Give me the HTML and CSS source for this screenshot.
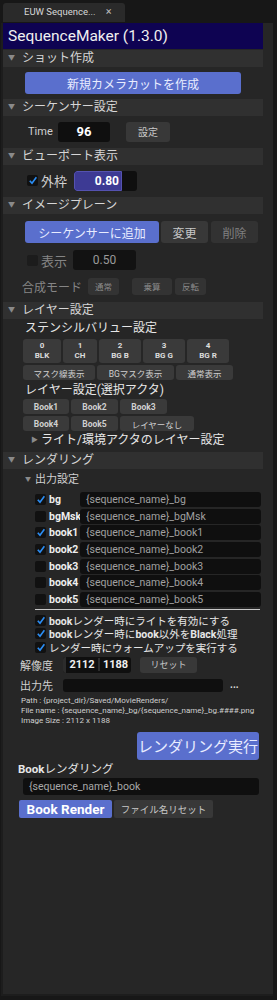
FILE: index.html
```
<!DOCTYPE html>
<html lang="ja">
<head>
  <meta charset="utf-8">
  <title>SequenceMaker</title>
  <link rel="stylesheet" href="styles.css">
</head>
<body>
<div class="tabbar">
  <div class="tab">EUW Sequence... <span class="close">×</span></div>
</div>

<div class="panel">
  <div class="content">
    <div class="title">SequenceMaker (1.3.0)</div>

    <!-- shot -->
    <div class="sec-head"><span class="tri">▼</span>ショット作成</div>
    <div class="sec shot">
      <button class="btn blue wide">新規カメラカットを作成</button>
    </div>

    <!-- sequencer -->
    <div class="sec-head"><span class="tri">▼</span>シーケンサー設定</div>
    <div class="sec row seq">
      <span class="lbl small">Time</span>
      <div class="field time">96</div>
      <button class="btn dark set">設定</button>
    </div>

    <!-- viewport -->
    <div class="sec-head"><span class="tri">▼</span>ビューポート表示</div>
    <div class="sec row vp">
      <span class="check on"></span>
      <span class="lbl">外枠</span>
      <div class="field slider"><div class="fill">0.80</div></div>
    </div>

    <!-- image plane -->
    <div class="sec-head"><span class="tri">▼</span>イメージプレーン</div>
    <div class="sec plane">
      <div class="row btns">
        <button class="btn blue add">シーケンサーに追加</button>
        <button class="btn dark change">変更</button>
        <button class="btn dark off del">削除</button>
      </div>
      <div class="row show">
        <span class="check dim"></span>
        <span class="lbl dim">表示</span>
        <div class="field opacity">0.50</div>
      </div>
      <div class="row blend">
        <span class="lbl dim">合成モード</span>
        <button class="btn mini">通常</button>
        <button class="btn mini mul">乗算</button>
        <button class="btn mini">反転</button>
      </div>
    </div>

    <!-- layers -->
    <div class="sec-head"><span class="tri">▼</span>レイヤー設定</div>
    <div class="sec layers">
      <div class="sub">ステンシルバリュー設定</div>
      <div class="row stencil">
        <button class="btn st w38">0<br>BLK</button>
        <button class="btn st w34">1<br>CH</button>
        <button class="btn st w42">2<br>BG B</button>
        <button class="btn st w42">3<br>BG G</button>
        <button class="btn st w42">4<br>BG R</button>
      </div>
      <div class="row stencil2">
        <button class="btn sm w72">マスク線表示</button>
        <button class="btn sm w77">BGマスク表示</button>
        <button class="btn sm w57">通常表示</button>
      </div>
      <div class="sub actor">レイヤー設定(選択アクタ)</div>
      <div class="book-grid">
        <button class="btn sm b">Book1</button>
        <button class="btn sm b">Book2</button>
        <button class="btn sm b">Book3</button>
        <button class="btn sm b">Book4</button>
        <button class="btn sm b">Book5</button>
        <button class="btn sm none">レイヤーなし</button>
      </div>
      <div class="light"><span class="tri side">▶</span>ライト/環境アクタのレイヤー設定</div>
    </div>

    <!-- rendering -->
    <div class="sec-head"><span class="tri">▼</span>レンダリング</div>
    <div class="sec render">
      <div class="out-head"><span class="tri">▼</span>出力設定</div>
      <div class="outputs">
        <div class="out"><span class="check on"></span><span class="name">bg</span><div class="field path">{sequence_name}_bg</div></div>
        <div class="out"><span class="check"></span><span class="name">bgMsk</span><div class="field path">{sequence_name}_bgMsk</div></div>
        <div class="out"><span class="check on"></span><span class="name">book1</span><div class="field path">{sequence_name}_book1</div></div>
        <div class="out"><span class="check on"></span><span class="name">book2</span><div class="field path">{sequence_name}_book2</div></div>
        <div class="out"><span class="check"></span><span class="name">book3</span><div class="field path">{sequence_name}_book3</div></div>
        <div class="out"><span class="check"></span><span class="name">book4</span><div class="field path">{sequence_name}_book4</div></div>
        <div class="out"><span class="check"></span><span class="name">book5</span><div class="field path">{sequence_name}_book5</div></div>
        <hr class="sep">
        <div class="opt"><span class="check on"></span><span><b>book</b>レンダー時にライトを有効にする</span></div>
        <div class="opt"><span class="check on"></span><span><b>book</b>レンダー時に<b>book</b>以外を<b>Black</b>処理</span></div>
        <div class="opt"><span class="check on"></span><span>レンダー時にウォームアップを実行する</span></div>
      </div>
      <div class="row res">
        <span class="lbl small">解像度</span>
        <div class="field size"><span class="grip"></span><span class="w">2112</span><span class="h">1188</span></div>
        <button class="btn dark reset">リセット</button>
      </div>
      <div class="row dest">
        <span class="lbl small">出力先</span>
        <div class="field dir"></div>
        <span class="dots">...</span>
      </div>
      <div class="info">
        <div>Path : {project_dir}/Saved/MovieRenders/</div>
        <div>File name : {sequence_name}_bg/{sequence_name}_bg.####.png</div>
        <div>Image Size : 2112 x 1188</div>
      </div>
      <div class="run-row">
        <button class="btn blue run">レンダリング実行</button>
      </div>
      <div class="book-title"><b>Book</b>レンダリング</div>
      <div class="field book-name">{sequence_name}_book</div>
      <div class="row book-btns">
        <button class="btn blue book-render">Book Render</button>
        <button class="btn dark fname">ファイル名リセット</button>
      </div>
    </div>
  </div>
</div>
</body>
</html>
```

FILE: styles.css
```
body {
    margin: 0;
    width: 277px;
    height: 1000px;
    background-color: #171717;
    color: #c8c8c8;
    font-family: Roboto, "Noto Sans CJK JP", sans-serif;
    overflow: hidden;
}

button {
    font-family: inherit;
    border: none;
    padding: 0;
    margin: 0;
}

.tabbar {
    height: 23px;
    padding: 3px 0 0 3px;
    box-sizing: border-box;
}

.tab {
    width: 122px;
    height: 19px;
    background-color: #2a2a2a;
    border-radius: 3px 3px 0 0;
    font-size: 9.5px;
    color: #d8d8d8;
    line-height: 18px;
    padding-left: 21px;
    box-sizing: border-box;
    white-space: nowrap;
}

.tab .close {
    margin-left: 8px;
    color: #bbb;
    font-size: 11px;
}

.panel {
    margin-left: 1px;
    width: 272px;
    height: 973px;
    background-color: #262626;
    border-left: 2px solid #1d1d1d;
    border-bottom: 2px solid #1d1d1d;
    box-sizing: border-box;
    padding-right: 10px;
}

.content {
    display: flex;
    flex-direction: column;
}

.title {
    height: 26px;
    background-color: #0e0352;
    color: #f0f0f0;
    font-size: 15.5px;
    line-height: 26px;
    padding-left: 5px;
}

.sec-head {
    height: 17px;
    background-color: #303030;
    color: #d6d6d6;
    font-size: 12px;
    line-height: 17px;
    padding-left: 5px;
    margin-top: 1px;
}

.tri {
    display: inline-block;
    font-size: 7px;
    color: #8a8a8a;
    width: 14px;
    vertical-align: 2px;
}

.tri.side {
    font-size: 7px;
    width: 10px;
}

.sec {
    padding-left: 22px;
}

.row {
    display: flex;
    align-items: center;
}

.btn {
    border-radius: 3px;
    color: #d0d0d0;
    text-align: center;
    white-space: nowrap;
}

.btn.blue {
    background-color: #5a6fcd;
    color: #e8ecff;
}

.btn.dark {
    background-color: #383838;
    color: #c8c8c8;
}

.btn.dark.off {
    background-color: #323232;
    color: #808080;
}

.field {
    background-color: #0f0f0f;
    border-radius: 3px;
    white-space: nowrap;
}

.lbl {
    font-size: 13px;
    color: #d0d0d0;
    white-space: nowrap;
}

.lbl.small {
    font-size: 11px;
}

.lbl.dim {
    color: #858585;
}

.check {
    width: 11px;
    height: 11px;
    background-color: #111;
    border-radius: 2px;
    flex-shrink: 0;
    position: relative;
}

.check.on::after {
    content: "";
    position: absolute;
    left: 2px;
    top: 1px;
    width: 8px;
    height: 9px;
    background: url('data:image/svg+xml;utf8,<svg xmlns="http://www.w3.org/2000/svg" viewBox="0 0 8 9"><path d="M0.8 4.8 L3 7.2 L7.4 1.2" fill="none" stroke="%232b8ef5" stroke-width="1.7"/></svg>') no-repeat;
}

.check.dim {
    background-color: #1c1c1c;
}

/* shot */
.shot {
    padding: 5px 0 4px 22px;
}

.btn.wide {
    width: 216px;
    height: 22px;
    font-size: 12px;
}

/* sequencer */
.seq {
    height: 31px;
}

.seq .lbl {
    margin-left: 3px;
    width: 30px;
}

.field.time {
    width: 52px;
    height: 20px;
    color: #fff;
    font-weight: bold;
    font-size: 13px;
    line-height: 20px;
    text-align: center;
}

.btn.set {
    margin-left: 16px;
    width: 44px;
    height: 20px;
    font-size: 10px;
}

/* viewport */
.vp {
    height: 31px;
    padding-left: 24px;
}

.vp .lbl {
    margin-left: 3px;
    width: 33px;
}

.field.slider {
    width: 63px;
    height: 20px;
    overflow: hidden;
}

.slider .fill {
    width: 48px;
    height: 20px;
    box-sizing: border-box;
    background-color: #3d3a94;
    border: 1px solid #5552b0;
    border-radius: 3px 0 0 3px;
    color: #fff;
    font-weight: bold;
    font-size: 12px;
    line-height: 18px;
    text-align: right;
    padding-right: 2px;
}

/* image plane */
.plane {
    padding: 7px 0 6px 22px;
}

.btns .btn {
    height: 22px;
    font-size: 12px;
}

.btn.add {
    width: 134px;
}

.btn.change {
    width: 47px;
    margin-left: 2px;
}

.btn.del {
    width: 47px;
    margin-left: 3px;
}

.show {
    margin-top: 7px;
    padding-left: 2px;
    height: 20px;
}

.show .lbl {
    margin-left: 3px;
    width: 32px;
}

.field.opacity {
    width: 63px;
    height: 20px;
    line-height: 20px;
    color: #9a9a9a;
    font-size: 12px;
    text-align: center;
    background-color: #121212;
}

.blend {
    margin-top: 7px;
    margin-left: -3px;
    height: 18px;
}

.blend .lbl {
    font-size: 12px;
    width: 66px;
}

.btn.mini {
    width: 31px;
    height: 17px;
    font-size: 8.5px;
    background-color: #333;
    color: #8a8a8a;
    margin-right: 13px;
}

.btn.mini.mul {
    width: 40px;
    margin-right: 3px;
}

/* layers */
.layers {
    padding: 0 0 3px 20px;
}

.sub {
    font-size: 12px;
    color: #e6e6e6;
    line-height: 18px;
    margin-left: 2px;
    white-space: nowrap;
}

.stencil {
    margin-top: 2px;
    gap: 2px;
}

.btn.st {
    height: 24px;
    background-color: #3a3a3a;
    font-size: 8px;
    font-weight: bold;
    line-height: 10px;
    color: #dcdcdc;
}

.w34 { width: 34px; }
.w38 { width: 38px; }
.w42 { width: 42px; }
.w57 { width: 57px; }
.w72 { width: 72px; }
.w77 { width: 77px; }

.btn.sm {
    height: 15px;
    background-color: #3a3a3a;
    font-size: 8.5px;
    color: #d0d0d0;
}

.stencil2 {
    margin-top: 2px;
    gap: 2px;
}

.sub.actor {
    margin-top: 1px;
}

.book-grid {
    display: grid;
    grid-template-columns: 46px 47px 47px;
    gap: 2px 2px;
}

.btn.sm.b {
    font-weight: bold;
}

.btn.sm.none {
    width: 74px;
}

.light {
    margin-top: 1px;
    padding-left: 8px;
    font-size: 12px;
    color: #e6e6e6;
    line-height: 16px;
    white-space: nowrap;
}

/* render */
.render {
    padding-left: 22px;
    padding-top: 3px;
}

.out-head {
    font-size: 11px;
    color: #d0d0d0;
    line-height: 13px;
}

.out-head .tri {
    width: 10px;
    font-size: 6px;
}

.outputs {
    padding-left: 10px;
    margin-top: 6px;
    margin-right: 2px;
}

.out {
    display: flex;
    align-items: center;
    height: 15px;
    margin-bottom: 1.67px;
}

.out .name {
    margin-left: 3px;
    width: 31px;
    font-size: 10.5px;
    font-weight: bold;
    color: #eee;
    white-space: nowrap;
}

.field.path {
    flex: 1;
    height: 15px;
    line-height: 15px;
    font-size: 10.5px;
    color: #a0a0a0;
    padding-left: 6px;
}

.sep {
    border: none;
    border-top: 1px solid #c8c8c8;
    margin: 0 1px 4px 0;
}

.opt {
    display: flex;
    align-items: center;
    height: 13px;
    font-size: 10.5px;
    color: #e6e6e6;
    margin-bottom: 0.5px;
    white-space: nowrap;
}

.opt .check {
    margin-right: 3px;
}

.res {
    margin-top: 3px;
    margin-left: -5px;
    height: 16px;
}

.res .lbl, .dest .lbl {
    width: 43px;
}

.field.size {
    width: 68px;
    height: 16px;
    display: flex;
    align-items: center;
    font-size: 11px;
    font-weight: bold;
    color: #f0f0f0;
}

.size .grip {
    width: 3px;
    height: 16px;
    background-color: #2c2c2c;
    border-radius: 3px 0 0 3px;
}

.size .w {
    width: 32px;
    text-align: center;
    border-right: 2px solid #2c2c2c;
}

.size .h {
    width: 31px;
    text-align: center;
}

.btn.reset {
    margin-left: 9px;
    width: 57px;
    height: 16px;
    font-size: 9px;
}

.dest {
    margin-top: 6px;
    margin-left: -5px;
    height: 13px;
}

.field.dir {
    width: 160px;
    height: 13px;
}

.dots {
    margin-left: 7px;
    font-size: 10px;
    font-weight: bold;
    color: #ddd;
    line-height: 8px;
}

.info {
    margin-top: 4px;
    margin-left: -4px;
    font-size: 8px;
    line-height: 10px;
    color: #cfcfcf;
    white-space: nowrap;
}

.run-row {
    display: flex;
    justify-content: flex-end;
    margin-top: 6px;
    margin-right: 4px;
}

.btn.run {
    width: 122px;
    height: 28px;
    font-size: 15px;
}

.book-title {
    margin-top: 2px;
    margin-left: -7px;
    font-size: 11.5px;
    line-height: 14px;
    color: #e6e6e6;
}

.field.book-name {
    margin-top: 2px;
    margin-left: -2px;
    margin-right: 4px;
    height: 17px;
    line-height: 17px;
    font-size: 10.5px;
    color: #a8a8a8;
    padding-left: 6px;
}

.book-btns {
    margin-top: 5px;
    margin-left: -6px;
}

.btn.book-render {
    width: 93px;
    height: 18px;
    font-size: 13.5px;
    font-weight: bold;
    color: #fff;
    border-radius: 2px;
}

.btn.fname {
    width: 99px;
    height: 18px;
    margin-left: 2px;
    font-size: 9.5px;
    border-radius: 2px;
}
```
